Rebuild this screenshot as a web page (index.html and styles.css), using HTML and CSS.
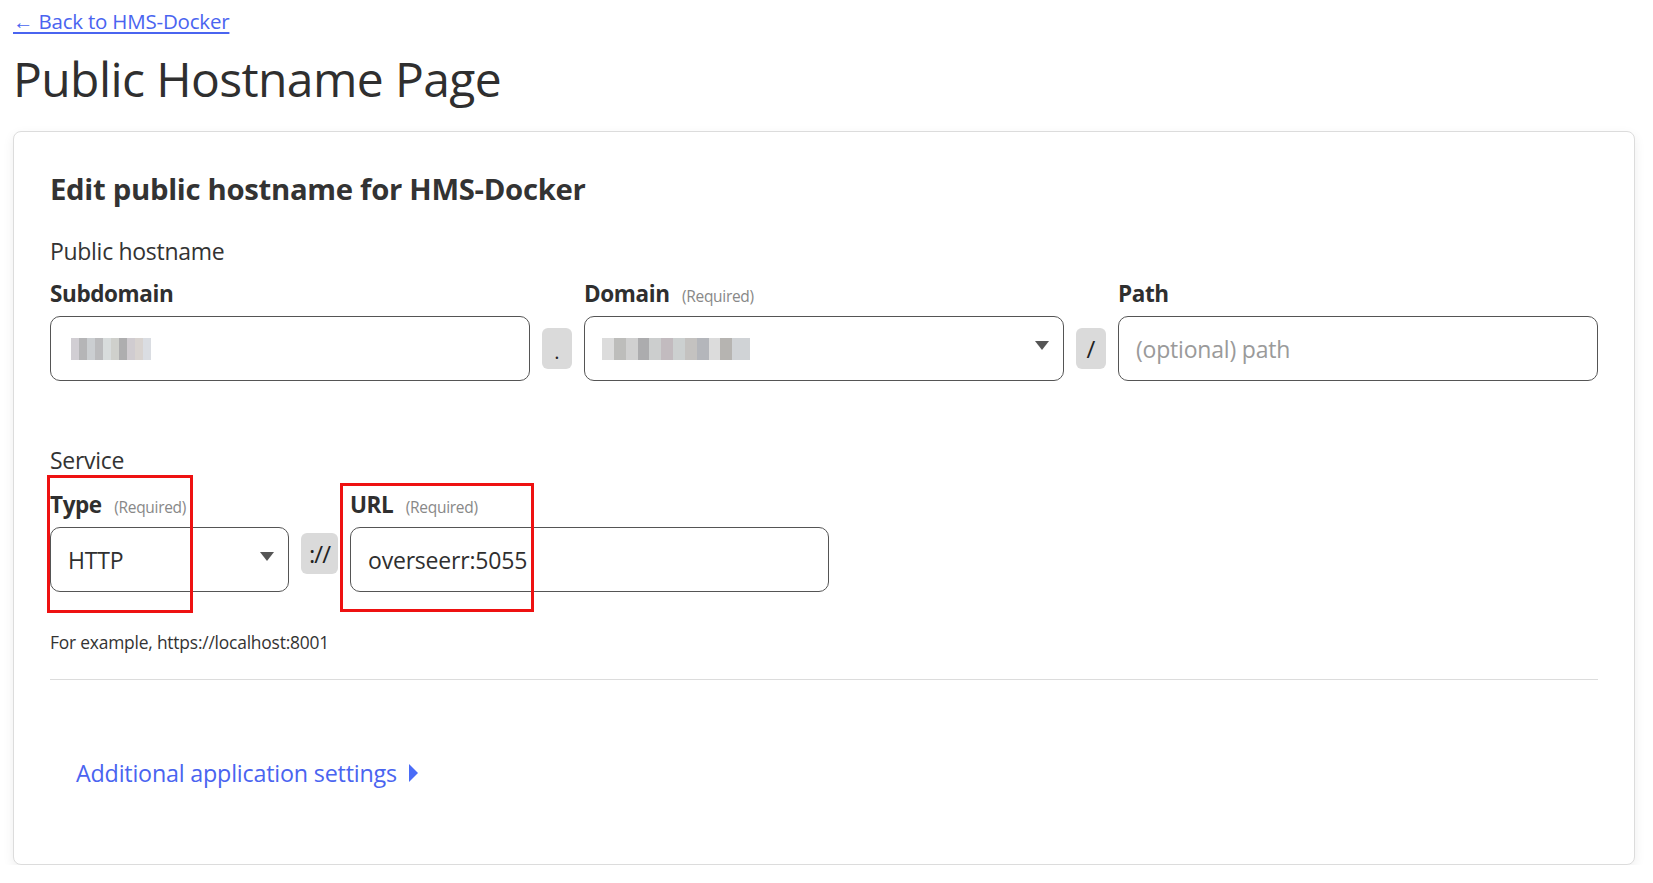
FILE: index.html
```html
<!DOCTYPE html>
<html lang="en">
<head>
<meta charset="utf-8">
<title>Public Hostname Page</title>
<link rel="stylesheet" href="styles.css">
</head>
<body>
<a class="back" href="#">← Back to HMS-Docker</a>
<h1 class="title">Public Hostname Page</h1>
<section class="card">
  <h2 class="card-title">Edit public hostname for HMS-Docker</h2>

  <div class="group-label">Public hostname</div>
  <div class="row">
    <div class="field">
      <label class="lbl">Subdomain</label>
      <div class="input"><span class="blur blur-sub"></span></div>
    </div>
    <div class="addon">.</div>
    <div class="field">
      <label class="lbl">Domain <span class="req">(Required)</span></label>
      <div class="input select"><span class="blur blur-dom"></span><span class="caret"></span></div>
    </div>
    <div class="addon slash">/</div>
    <div class="field">
      <label class="lbl">Path</label>
      <div class="input"><span class="placeholder">(optional) path</span></div>
    </div>
  </div>

  <div class="group-label service">Service</div>
  <div class="row service-row">
    <div class="field type-field">
      <label class="lbl">Type <span class="req">(Required)</span></label>
      <div class="input select"><span class="value">HTTP</span><span class="caret"></span></div>
      <span class="mark mark-type"></span>
    </div>
    <div class="addon proto">://</div>
    <div class="field url-field">
      <label class="lbl">URL <span class="req">(Required)</span></label>
      <div class="input"><span class="value">overseerr:5055</span></div>
      <span class="mark mark-url"></span>
    </div>
  </div>
  <p class="hint">For example, https://localhost:8001</p>
  <hr class="divider">
  <a class="more" href="#">Additional application settings <span class="tri"></span></a>
</section>
</body>
</html>
```
FILE: styles.css
```css
* { box-sizing: border-box; }
body {
  margin: 0;
  padding: 8px 18px 0 13px;
  font-family: "Open Sans", "Noto Sans", sans-serif;
  color: #333;
  background: #fff;
}
.back {
  display: inline-block;
  font-size: 20.5px;
  line-height: 26px;
  color: #4a64f0;
  text-decoration: underline;
  text-underline-offset: 3px;
  letter-spacing: -0.2px;
}
.title {
  margin: 16px 0 0 0;
  font-size: 48px;
  line-height: 58px;
  font-weight: 400;
  color: #2f2f2f;
  letter-spacing: -0.6px;
}
.card {
  margin-top: 23px;
  border: 1px solid #dcdcdc;
  border-radius: 8px;
  box-shadow: 0 4px 12px rgba(0,0,0,0.07);
  padding: 38px 36px 35px 36px;
  background: #fff;
}
.card-title {
  margin: 0;
  font-size: 29.3px;
  line-height: 38px;
  font-weight: 700;
  color: #333;
  letter-spacing: -0.3px;
}
.group-label {
  margin-top: 27px;
  font-size: 23px;
  line-height: 32px;
  color: #333;
  letter-spacing: -0.3px;
}
.group-label.service { margin-top: 63px; }
.row {
  display: flex;
  align-items: flex-end;
  gap: 12px;
  margin-top: 12px;
}
.field {
  flex: 1;
  display: flex;
  flex-direction: column;
  position: relative;
}
.lbl {
  font-size: 22.5px;
  line-height: 30px;
  height: 30px;
  font-weight: 700;
  color: #2f2f2f;
  margin-bottom: 7px;
  letter-spacing: -0.4px;
  white-space: nowrap;
}
.req {
  font-size: 15.5px;
  line-height: 1;
  font-weight: 400;
  color: #888;
  margin-left: 7px;
  letter-spacing: -0.3px;
}
.input {
  height: 65px;
  border: 1.5px solid #555;
  border-radius: 10px;
  display: flex;
  align-items: center;
  padding: 0 17px 0 17px;
  font-size: 23px;
  color: #333;
}
.select { justify-content: space-between; }
.caret {
  width: 0; height: 0;
  border-left: 7px solid transparent;
  border-right: 7px solid transparent;
  border-top: 9px solid #555;
  margin-right: -3px;
  margin-top: -6px;
}
.placeholder { color: #9a9a9a; letter-spacing: -0.2px; }
.value { color: #2f2f2f; letter-spacing: -0.2px; }
.blur {
  display: inline-block;
  height: 22px;
  margin-left: 3px;
  background:
    linear-gradient(90deg, #c9c6cc 0 10%, #a9a9ab 10% 20%, #c3c6ca 20% 30%, #b0b0b2 30% 40%, #d2d6d6 40% 50%, #c7c8c4 50% 60%, #a0a0a2 60% 70%, #c8c4c8 70% 80%, #d2ccc8 80% 90%, #d4d8de 90% 100%);
  opacity: 0.85;
  filter: blur(0.6px);
}
.blur-sub { width: 80px; }
.blur-dom {
  width: 148px;
  margin-left: 0;
  background:
    linear-gradient(90deg, #d6d6d6 0 8%, #b2b2b0 8% 16%, #c8c8c8 16% 24%, #9e9ea0 24% 32%, #c4c6c6 32% 40%, #b8b0b4 40% 48%, #c4c8c8 48% 56%, #bab8b6 56% 64%, #a8aab0 64% 72%, #d6d6d6 72% 80%, #aaa8a4 80% 88%, #c8ccd0 88% 100%);
}
.addon {
  flex: 0 0 30px;
  height: 41px;
  margin-bottom: 12px;
  background: #dadada;
  border-radius: 6px;
  display: flex;
  align-items: center;
  justify-content: center;
  font-size: 20px;
  color: #222;
  line-height: 1;
  padding-top: 6px;
}
.addon.slash { font-size: 24px; padding-top: 0; }
.addon.proto {
  flex: 0 0 37px;
  font-size: 24px;
  padding-top: 0;
  margin-bottom: 18px;
  letter-spacing: -1px;
}
.service-row { margin-top: 14px; }
.type-field { flex: 0 0 239px; }
.url-field { flex: 0 0 479px; }
.mark {
  position: absolute;
  border: 3px solid #ee1111;
  pointer-events: none;
}
.mark-type { left: -3px; top: -15px; width: 146px; height: 138px; }
.mark-url { left: -10px; top: -7px; width: 194px; height: 129px; }
.hint {
  margin: 38px 0 0 0;
  font-size: 17.4px;
  line-height: 24px;
  color: #333;
  letter-spacing: -0.2px;
}
.divider {
  border: 0;
  border-top: 1.5px solid #dcdcdc;
  margin: 25px 0 0 0;
}
.more {
  display: inline-flex;
  align-items: center;
  margin: 77px 0 40px 26px;
  font-size: 23.3px;
  line-height: 32px;
  color: #4a64f0;
  text-decoration: none;
  letter-spacing: -0.2px;
}
.tri {
  display: inline-block;
  width: 0; height: 0;
  border-top: 9px solid transparent;
  border-bottom: 9px solid transparent;
  border-left: 9px solid #4a6cf7;
  margin-left: 12px;
}
```
